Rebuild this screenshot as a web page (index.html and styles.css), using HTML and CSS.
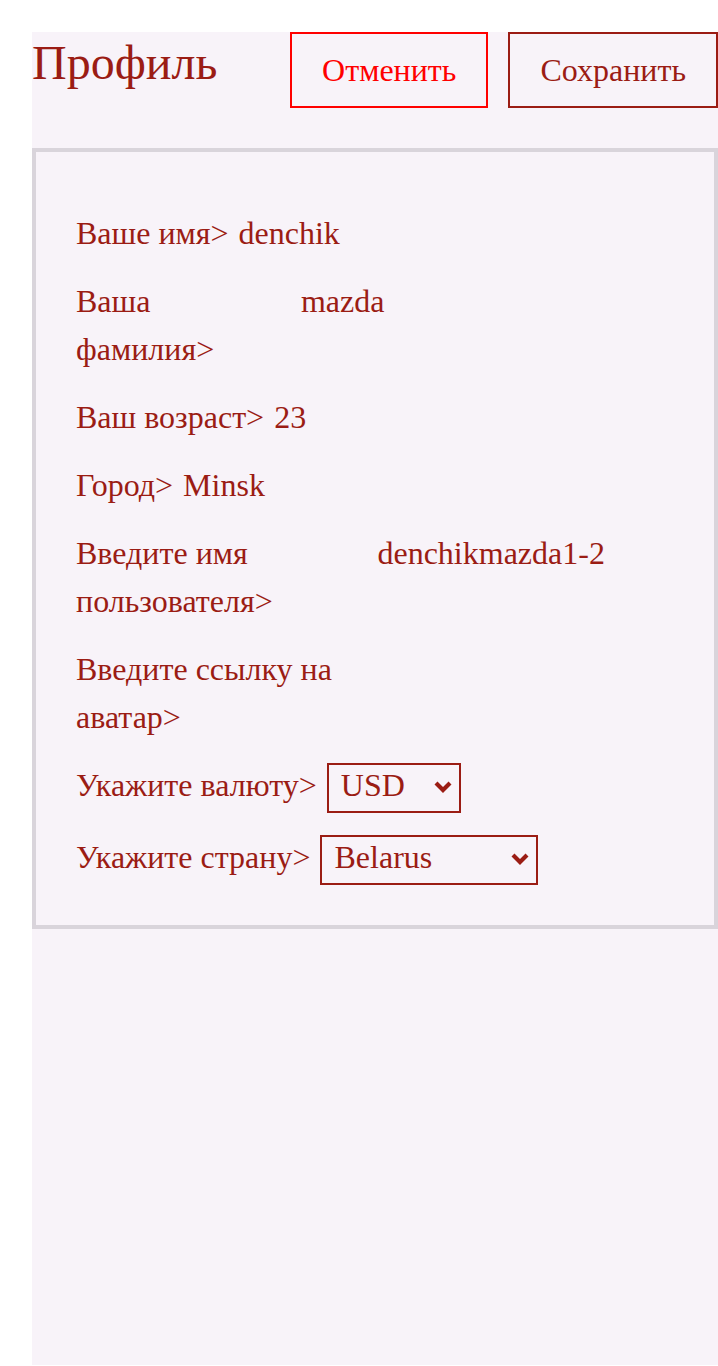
FILE: index.html
```html
<!DOCTYPE html>
<html lang="ru">
<head>
<meta charset="utf-8">
<title>Профиль</title>
<link rel="stylesheet" href="styles.css">
</head>
<body>
<div class="page">
  <header class="header">
    <h1 class="title">Профиль</h1>
    <div class="actions">
      <button class="btn btn-cancel" type="button">Отменить</button>
      <button class="btn btn-save" type="button">Сохранить</button>
    </div>
  </header>
  <form class="card">
    <div class="row"><label class="label">Ваше имя&gt;</label><input class="value" value="denchik"></div>
    <div class="row"><label class="label">Ваша фамилия&gt;</label><input class="value" value="mazda"></div>
    <div class="row"><label class="label">Ваш возраст&gt;</label><input class="value" value="23"></div>
    <div class="row"><label class="label">Город&gt;</label><input class="value" value="Minsk"></div>
    <div class="row"><label class="label">Введите имя пользователя&gt;</label><input class="value" value="denchikmazda1-2"></div>
    <div class="row"><label class="label">Введите ссылку на аватар&gt;</label><input class="value" value=""></div>
    <div class="row"><label class="label">Укажите валюту&gt;</label>
      <span class="select-wrap">
        <select class="select select-currency"><option>USD</option><option>EUR</option><option>BYN</option></select>
        <svg class="chevron" width="18" height="12" viewBox="0 0 18 12" aria-hidden="true"><path d="M2 2 L9 9 L16 2" fill="none" stroke="#9b1c14" stroke-width="4.2"/></svg>
      </span>
    </div>
    <div class="row"><label class="label">Укажите страну&gt;</label>
      <span class="select-wrap">
        <select class="select select-country"><option>Belarus</option><option>Russia</option><option>Ukraine</option></select>
        <svg class="chevron" width="18" height="12" viewBox="0 0 18 12" aria-hidden="true"><path d="M2 2 L9 9 L16 2" fill="none" stroke="#9b1c14" stroke-width="4.2"/></svg>
      </span>
    </div>
  </form>
</div>
</body>
</html>
```

FILE: styles.css
```css
html, body {
  margin: 0;
  padding: 0;
}
body {
  background: #ffffff;
  padding: 32px 0 0 32px;
  font-family: "Liberation Serif", "Times New Roman", serif;
  color: #9b1c14;
}
.page {
  background: #f8f3f9;
  min-height: calc(100vh - 33px);
}
.header {
  display: flex;
  justify-content: space-between;
  align-items: flex-start;
  margin-bottom: 40px;
}
.title {
  margin: 3px 0 0 0;
  font-size: 48px;
  font-weight: normal;
  line-height: normal;
}
.actions {
  display: flex;
  gap: 20px;
}
.btn {
  font-family: inherit;
  font-size: 32px;
  line-height: 48px;
  padding: 12px 30px;
  background: transparent;
  border: 2px solid;
  margin: 0;
  cursor: pointer;
}
.btn-cancel {
  color: #ff0000;
  border-color: #ff0000;
}
.btn-save {
  color: #9b1c14;
  border-color: #9b1c14;
}
.card {
  border: 4px solid #d9d4db;
  padding: 57px 40px 40px 40px;
  display: flex;
  flex-direction: column;
  gap: 20px;
  margin: 0;
}
.row {
  display: flex;
  align-items: baseline;
  gap: 10px;
  font-size: 32px;
  line-height: 48px;
}
.label {
  flex: 0 1 auto;
}
.value {
  flex: 0 1 383px;
  min-width: 0;
  height: 48px;
  padding: 0;
  border: 0;
  background: transparent;
  font: inherit;
  color: inherit;
  outline: none;
}
.select-wrap {
  position: relative;
  display: inline-flex;
  flex: 0 0 auto;
}
.select {
  -webkit-appearance: none;
  appearance: none;
  font-family: inherit;
  font-size: 32px;
  line-height: 38px;
  color: #9b1c14;
  background: transparent;
  border: 2px solid #9b1c14;
  border-radius: 0;
  padding: 1px 30px 7px 12px;
  height: 50px;
  margin: 0;
}
.select-currency {
  width: 134px;
}
.select-country {
  width: 218px;
}
.chevron {
  position: absolute;
  right: 9px;
  top: 18px;
  pointer-events: none;
}
```
